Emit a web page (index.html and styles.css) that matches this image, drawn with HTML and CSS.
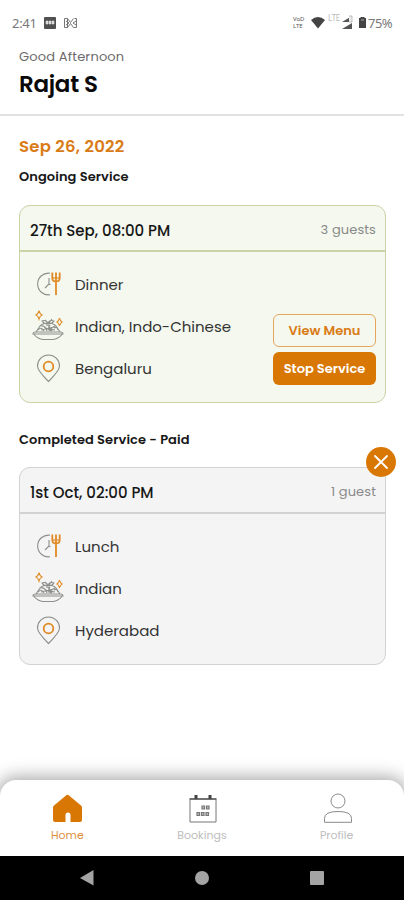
FILE: index.html
```
<!DOCTYPE html>
<html lang="en">
<head>
<meta charset="utf-8">
<title>Bookings</title>
<link rel="stylesheet" href="styles.css">
</head>
<body>
<svg class="defs" aria-hidden="true">
  <symbol id="meal" viewBox="0 0 32 32">
    <path class="line" d="M18 5.200A10.900 10.900 0 1 0 18 26.800M17 10v6l-4 4M17 16.500h1.500"/>
    <path class="accent" d="M20.300 4.500v5.500q0 3.500 3.700 3.500t3.700-3.500V4.500M24 4.500v22.500"/>
    <path class="accent thin" d="M20.300 10h7.400"/>
  </symbol>
  <symbol id="cuisine" viewBox="0 0 32 32">
    <path class="accent fine" d="M7 .5q.8 3.500 3 4.500-2.200 1-3 4-.8-3-3-4 2.200-1 3-4ZM27.500 8q.7 3 2.500 4-1.800 1-2.500 4-.7-3-2.500-4 1.800-1 2.500-4Z"/>
    <path class="line" d="M1 24q0-2 2.500-2h25q2.500 0 2.500 2ZM2 24.500q4 4.500 9 5h10q5-.5 9-5M4 22l4-6q3-3 8-3t8 3l4 6M16 14q-4 0-6-3 4-2 6 3Zm0 0q1-5 6-3-2 3-6 3ZM16 13l-3-3m4 3 3-4"/>
    <path class="line" d="M6 20q3-4 6 1m-3-5q4-1 6 5m-1-6q5 0 3 6m1-6q-4 4 5 5m0-4q-5 2-4 5m3-3q3-2 4 2M9 20l13-3M12 17l8 4"/>
  </symbol>
  <symbol id="place" viewBox="0 0 32 32">
    <path class="line" d="M16.500 29.500Q5.500 18.500 5.500 14a11 11 0 0 1 22 0q0 4.500-11 15.500Z"/>
    <circle class="accent" cx="16.500" cy="14.500" r="4.800"/>
  </symbol>
</svg>
<div class="screen">
  <div class="status">
    <span class="clock">2:41</span>
    <svg class="notif" width="36" height="14" viewBox="0 0 36 14">
      <rect x="1" y="1" width="12" height="12" rx="1" fill="#505050"/>
      <path d="M3 5h2v3H3Zm3 0h2v3H6Zm3 0h2v3H9Z" fill="#ddd" stroke="#ddd" stroke-width=".6"/>
      <path d="M21.500 2.500h3v9h-3Zm10 0h2v9h-3l-3-4-3 4m0-9 3 4 3-4M23 5l3 2-3 2m10-4-3 2 3 2" fill="none" stroke="#777"/>
    </svg>
    <span class="volte"><span>VoD</span><span>LTE</span></span>
    <svg class="wifi" width="16" height="14" viewBox="0 0 16 14"><path d="M1 4q7-6 14 0L8 12.500Z" fill="#444"/></svg>
    <span class="lte">LTE</span>
    <svg class="signal" width="13" height="15" viewBox="0 0 13 15"><path d="M1 7 11 1v6ZM1 14l10-6v6Z" fill="#555"/><path d="M8 1h3v6H8" fill="#eee" stroke="#999" stroke-width=".6"/></svg>
    <svg class="battery" width="9" height="13" viewBox="0 0 9 13"><path d="M2.500 1h4v1h1.500v10H1V2h1.500Z" fill="#444"/><path d="M3 4h3" stroke="#aaa"/></svg>
    <span class="percent">75%</span>
  </div>
  <header class="header">
    <div class="greeting">Good Afternoon</div>
    <h1 class="name">Rajat S</h1>
  </header>
  <main class="main">
    <div class="date">Sep 26, 2022</div>
    <h2 class="label ongoing-label">Ongoing Service</h2>
    <section class="card ongoing">
      <div class="card-head"><span class="when">27th Sep, 08:00 PM</span><span class="guests">3 guests</span></div>
      <div class="card-body">
        <div class="rows">
          <div class="row"><svg class="icon"><use href="#meal"/></svg><span>Dinner</span></div>
          <div class="row"><svg class="icon"><use href="#cuisine"/></svg><span>Indian, Indo-Chinese</span></div>
          <div class="row"><svg class="icon"><use href="#place"/></svg><span>Bengaluru</span></div>
        </div>
        <div class="actions">
          <button class="btn outline">View Menu</button>
          <button class="btn solid">Stop Service</button>
        </div>
      </div>
    </section>
    <h2 class="label completed-label">Completed Service - Paid</h2>
    <section class="card completed">
      <button class="close" aria-label="Close"><svg width="30" height="30" viewBox="0 0 30 30"><path d="m9 9 12 12M21 9 9 21" stroke="#fff" stroke-width="1.800" stroke-linecap="round"/></svg></button>
      <div class="card-head"><span class="when">1st Oct, 02:00 PM</span><span class="guests">1 guest</span></div>
      <div class="card-body">
        <div class="rows">
          <div class="row"><svg class="icon"><use href="#meal"/></svg><span>Lunch</span></div>
          <div class="row"><svg class="icon"><use href="#cuisine"/></svg><span>Indian</span></div>
          <div class="row"><svg class="icon"><use href="#place"/></svg><span>Hyderabad</span></div>
        </div>
      </div>
    </section>
  </main>
  <nav class="tabs">
    <div class="tab active">
      <svg width="32" height="32" viewBox="0 0 32 32"><path d="M15 2.500Q16.500 1.200 18 2.500L30 12.500q1 .9 1 2V27q0 2-2 2H19.500v-7q0-2.500-2.500-2.500T14.500 22v7H4q-2 0-2-2V14.500q0-1.100 1-2Z" fill="#d97704"/></svg>
      <span>Home</span>
    </div>
    <div class="tab">
      <svg width="32" height="32" viewBox="0 0 32 32"><path d="M4 6.500V29h26V6.500" fill="none" stroke="#777"/><path d="M3.500 6h27" stroke="#444" stroke-width="1.500"/><path d="M10 2v4M24 2v4" stroke="#444" stroke-width="3"/><path d="M16 13h2.500v3H16Zm4.500 0H23v3h-2.500ZM11 19.500h2.500v3H11Zm4.500 0H18v3h-2.500Zm4.500 0h2.500v3H20Z" fill="#bbb" stroke="#777" stroke-width="1.200"/></svg>
      <span>Bookings</span>
    </div>
    <div class="tab">
      <svg width="32" height="32" viewBox="0 0 32 32"><g fill="none" stroke="#8a8a8a"><circle cx="17" cy="8" r="7"/><path d="M3.500 29.300v-4q0-6.800 13.500-6.800t13.500 6.800v4Z"/></g></svg>
      <span>Profile</span>
    </div>
  </nav>
  <div class="system">
    <svg width="16" height="18" viewBox="0 0 16 18"><path d="M1 9 14.500 1v15.500Z" fill="#a4a4a4"/></svg>
    <svg width="16" height="16" viewBox="0 0 16 16"><circle cx="8" cy="8" r="7" fill="#a4a4a4"/></svg>
    <svg width="16" height="16" viewBox="0 0 16 16"><rect x="1" y="1" width="14" height="14" rx="1" fill="#a4a4a4"/></svg>
  </div>
</div>
</body>
</html>
```
FILE: styles.css
```
* { box-sizing: border-box; }
body { margin: 0; background: #fff; color: #171717; font-family: Poppins, Inter, sans-serif; }
h1, h2 { margin: 0; }
svg { display: block; flex: none; }
button { font: inherit; padding: 0; border: 0; }
.defs { position: absolute; width: 0; height: 0; }
.screen { width: 404px; height: 900px; display: flex; flex-direction: column; overflow: hidden; white-space: nowrap; }
.status { height: 46px; padding: 0 10px 1px 12px; display: flex; align-items: center; font-family: "Noto Sans", sans-serif; color: #777; }
.clock { font-size: 13px; width: 31px; letter-spacing: -.3px; }
.notif { margin-right: auto; }
.volte { display: flex; flex-direction: column; gap: 1px; font-size: 6.500px; line-height: 7px; width: 13px; color: #555; }
.volte span { height: 6px; line-height: 6px; font-size: 6px; }
.wifi { margin-left: 4px; }
.lte { font-size: 8px; line-height: 8px; margin: 0 1px 9px 2px; width: 12px; letter-spacing: -.4px; color: #bbb; }
.battery { margin-left: 4px; }
.percent { font-size: 13px; letter-spacing: -.5px; width: 26px; margin-left: 1px; }
.header { height: 70px; padding-top: 1px; padding-left: 19px; border-bottom: 2px solid #e2e2e2; }
.greeting { font-size: 13px; line-height: 20px; color: #6b6b6b; letter-spacing: .17px; }
.name { font-size: 23px; line-height: 35px; font-weight: 600; color: #090909; letter-spacing: -.3px; }
.main { height: 664px; padding: 18px 18px 0 19px; }
.date { font-size: 16.500px; line-height: 25px; font-weight: 600; color: #d97b17; letter-spacing: .25px; }
.label { font-size: 13px; line-height: 20px; font-weight: 600; letter-spacing: .08px; }
.ongoing-label { margin: 8px 0 18px; }
.completed-label { margin: 27px 0 17px; }
.card { position: relative; height: 198px; border: 1.500px solid; border-radius: 11px; }
.ongoing { background: #f4f8ee; border-color: #cbd3a6; }
.completed { background: #f4f4f4; border-color: #d2d2d2; }
.card-head { height: 46px; padding: 4px 9px 0 10px; border-bottom: 2px solid; border-color: inherit; display: flex; align-items: center; justify-content: space-between; font-size: 15px; }
.when { font-weight: 500; }
.guests { font-size: 13px; color: #898989; letter-spacing: .1px; }
.card-body { display: flex; justify-content: space-between; padding: 11px 9px 0 12px; }
.row { display: flex; align-items: center; gap: 11px; height: 42px; font-size: 15px; color: #333; }
.icon { width: 32px; height: 32px; fill: none; }
.line { stroke: #8d8f8b; stroke-width: 1.100; }
.accent { stroke: #e18a25; stroke-width: 1.800; }
.thin { stroke-width: 1.200; }
.fine { stroke-width: 1.100; }
.actions { display: flex; flex-direction: column; gap: 5px; padding-top: 51px; }
.btn { width: 103px; height: 33px; border-radius: 6px; font-size: 13px; font-weight: 600; }
.outline { border: 1.500px solid #e5a65e; color: #d97b17; background: transparent; }
.solid { background: #d97704; color: #fff; }
.close { position: absolute; right: -11px; top: -21px; width: 30px; height: 30px; border-radius: 50%; background: #d97704; }
.tabs { height: 76px; padding-top: 13px; display: grid; grid-template-columns: repeat(3, 1fr); background: #fff; border-radius: 16px 16px 0 0; box-shadow: 0 0 17px 3px rgba(0, 0, 0, .35); }
.tab { display: flex; flex-direction: column; align-items: center; font-size: 11px; line-height: 16px; color: #bdbdbd; gap: 2px; }
.active { color: #dc9142; }
.system { position: relative; height: 44px; background: #000; display: flex; align-items: center; gap: 99px; padding-left: 79px; }
```
